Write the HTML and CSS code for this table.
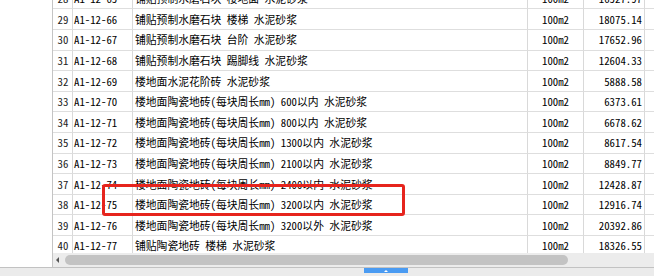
FILE: index.html
```html
<!DOCTYPE html>
<html lang="zh">
<head>
<meta charset="utf-8">
<link rel="stylesheet" href="styles.css">
</head>
<body>
<div class="page">
  <div class="main">
    <div class="gutter"></div>
    <div class="grid">
      <div class="viewport">
        <div class="row first"><div class="c n">28</div><div class="c code">A1-12-65</div><div class="c name">铺贴预制水磨石块 楼地面 水泥砂浆</div><div class="c unit">100m2</div><div class="c price">16527.97</div><div class="c rest"></div></div>
        <div class="row"><div class="c n">29</div><div class="c code">A1-12-66</div><div class="c name">铺贴预制水磨石块 楼梯 水泥砂浆</div><div class="c unit">100m2</div><div class="c price">18075.14</div><div class="c rest"></div></div>
        <div class="row"><div class="c n">30</div><div class="c code">A1-12-67</div><div class="c name">铺贴预制水磨石块 台阶 水泥砂浆</div><div class="c unit">100m2</div><div class="c price">17652.96</div><div class="c rest"></div></div>
        <div class="row"><div class="c n">31</div><div class="c code">A1-12-68</div><div class="c name">铺贴预制水磨石块 踢脚线 水泥砂浆</div><div class="c unit">100m2</div><div class="c price">12604.33</div><div class="c rest"></div></div>
        <div class="row"><div class="c n">32</div><div class="c code">A1-12-69</div><div class="c name">楼地面水泥花阶砖 水泥砂浆</div><div class="c unit">100m2</div><div class="c price">5888.58</div><div class="c rest"></div></div>
        <div class="row"><div class="c n">33</div><div class="c code">A1-12-70</div><div class="c name">楼地面陶瓷地砖(每块周长mm) 600以内 水泥砂浆</div><div class="c unit">100m2</div><div class="c price">6373.61</div><div class="c rest"></div></div>
        <div class="row"><div class="c n">34</div><div class="c code">A1-12-71</div><div class="c name">楼地面陶瓷地砖(每块周长mm) 800以内 水泥砂浆</div><div class="c unit">100m2</div><div class="c price">6678.62</div><div class="c rest"></div></div>
        <div class="row"><div class="c n">35</div><div class="c code">A1-12-72</div><div class="c name">楼地面陶瓷地砖(每块周长mm) 1300以内 水泥砂浆</div><div class="c unit">100m2</div><div class="c price">8617.54</div><div class="c rest"></div></div>
        <div class="row"><div class="c n">36</div><div class="c code">A1-12-73</div><div class="c name">楼地面陶瓷地砖(每块周长mm) 2100以内 水泥砂浆</div><div class="c unit">100m2</div><div class="c price">8849.77</div><div class="c rest"></div></div>
        <div class="row"><div class="c n">37</div><div class="c code">A1-12-74</div><div class="c name">楼地面陶瓷地砖(每块周长mm) 2400以内 水泥砂浆</div><div class="c unit">100m2</div><div class="c price">12428.87</div><div class="c rest"></div></div>
        <div class="row"><div class="c n">38</div><div class="c code">A1-12-75</div><div class="c name">楼地面陶瓷地砖(每块周长mm) 3200以内 水泥砂浆</div><div class="c unit">100m2</div><div class="c price">12916.74</div><div class="c rest"></div></div>
        <div class="row"><div class="c n">39</div><div class="c code">A1-12-76</div><div class="c name">楼地面陶瓷地砖(每块周长mm) 3200以外 水泥砂浆</div><div class="c unit">100m2</div><div class="c price">20392.86</div><div class="c rest"></div></div>
        <div class="row"><div class="c n">40</div><div class="c code">A1-12-77</div><div class="c name">铺贴陶瓷地砖 楼梯 水泥砂浆</div><div class="c unit">100m2</div><div class="c price">18326.55</div><div class="c rest"></div></div>
      </div>
      <div class="hscroll">
        <div class="arrow"></div>
        <div class="thumb"></div>
      </div>
    </div>
    <div class="highlight"></div>
  </div>
  <div class="strip">
    <div class="split-btn"><span class="up"></span></div>
  </div>
</div>
</body>
</html>
```

FILE: styles.css
```css
html, body {
  margin: 0;
  padding: 0;
  background: #fff;
}
.page {
  width: 654px;
  height: 276px;
  overflow: hidden;
  display: flex;
  flex-direction: column;
  font-family: "Noto Sans Mono CJK SC", "Noto Sans CJK SC", "DejaVu Sans Mono", monospace;
  font-size: 10.8px;
  color: #000;
}
.main {
  position: relative;
  display: flex;
  height: 267px;
}
.gutter {
  width: 52px;
  flex: none;
}
.grid {
  flex: 1;
  display: flex;
  flex-direction: column;
  border-left: 1px solid #c4c4c4;
  min-width: 0;
}
.viewport {
  height: 253px;
  overflow: hidden;
  flex: none;
}
.row {
  display: grid;
  grid-template-columns: 20px 60px 395px 56px 61px 1fr;
  height: 20.6px;
}
.row.first {
  margin-top: -11.2px;
}
.c {
  box-sizing: border-box;
  border-right: 1px solid #d9d9d9;
  border-bottom: 1px solid #dedede;
  display: flex;
  align-items: center;
  white-space: nowrap;
  overflow: hidden;
  line-height: 1;
}
.n {
  justify-content: center;
  padding-left: 1px;
  color: #222;
}
.code {
  padding-left: 1px;
}
.name {
  padding-left: 2px;
}
.unit {
  justify-content: center;
}
.price {
  justify-content: flex-end;
  padding-right: 2px;
}
.rest {
  border-right: none;
}
.hscroll {
  height: 14px;
  background: #ececec;
  display: flex;
  align-items: center;
  flex: none;
}
.arrow {
  width: 0;
  height: 0;
  margin-left: 3px;
  border-top: 3px solid transparent;
  border-bottom: 3px solid transparent;
  border-right: 3px solid #555;
}
.thumb {
  margin-left: 6px;
  width: 503px;
  height: 10px;
  border-radius: 5px;
  background: #c3c3c3;
}
.highlight {
  position: absolute;
  left: 102px;
  top: 184px;
  width: 303px;
  height: 32px;
  box-sizing: border-box;
  border: 3px solid #e6241d;
  border-radius: 3px;
}
.strip {
  flex: 1;
  border-top: 1px solid #c2c2c2;
  background: #ebebeb;
  display: flex;
  align-items: flex-start;
  padding-left: 364px;
}
.split-btn {
  width: 44px;
  height: 5px;
  background: #4a9bf2;
  display: flex;
  justify-content: center;
  align-items: center;
}
.up {
  width: 0;
  height: 0;
  border-left: 2px solid transparent;
  border-right: 2px solid transparent;
  border-bottom: 2px solid #fff;
}
```
